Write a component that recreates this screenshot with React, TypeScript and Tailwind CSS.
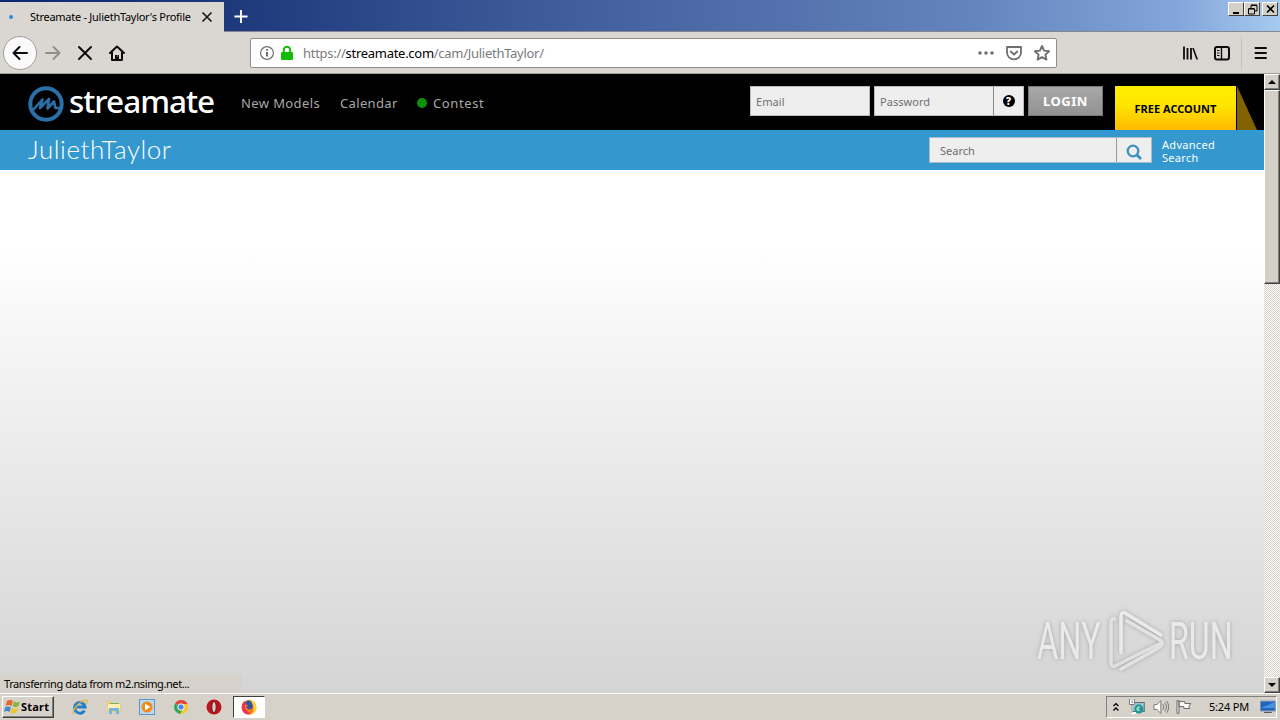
import type { ReactNode } from 'react';

const UI_FONT = "font-['Noto_Sans','Open_Sans',sans-serif]";

export default function App() {
  return (
    <div className={`flex h-[720px] w-[1280px] flex-col overflow-hidden bg-[#d6d2cb] text-black ${UI_FONT}`}>
      <TabStrip />
      <Toolbar />
      <div className="flex h-[619px]">
        <main className="relative flex w-[1264px] flex-col bg-white">
          <SiteHeader />
          <ModelBar />
          <div className="flex-1 bg-[linear-gradient(180deg,#ffffff_0%,#ffffff_14%,#d4d4d4_100%)]" />
          <div className="absolute bottom-0 left-0 flex h-[18px] w-[242px] items-center bg-[#d6d1ca] pb-0.5 pl-1 text-[11px] leading-none whitespace-nowrap">
            <span className="tracking-[-0.4px]">Transferring data from m2.nsimg.net...</span>
          </div>
          <Watermark />
        </main>
        <Scrollbar />
      </div>
      <Taskbar />
    </div>
  );
}

function TabStrip() {
  return (
    <div className="relative flex h-8 bg-[linear-gradient(90deg,#0b2a6d_0%,#203b7e_20%,#3d5b99_42%,#6484bd_76%,#83a5da_92%,#a6caf0_100%)]">
      <div className="mt-0.5 flex h-[30px] w-[224px] items-center bg-[#dad7d3] text-[11px]">
        <span className="ml-[9px] h-1 w-1 rounded-full bg-[#3584e4]" />
        <span className="ml-[17px] w-[166px] tracking-[-0.27px] whitespace-nowrap">Streamate - JuliethTaylor's Profile</span>
        <svg viewBox="0 0 12 12" className="ml-[5px] h-3 w-3"><path d="M1.5 1.5l9 9M10.5 1.5l-9 9" stroke="#1a1a1a" strokeWidth="1.7" /></svg>
      </div>
      <div className="flex flex-1 border-b border-[#828790] pt-[9px] pl-[9px]">
        <svg viewBox="0 0 16 16" className="h-[15px] w-4"><path d="M8 1v14M1 8h14" stroke="#fff" strokeWidth="2" /></svg>
      </div>
      <div className="absolute top-[2px] right-[2px] flex">
        <WindowButton><path d="M3 10h6" stroke="#000" strokeWidth="2" /></WindowButton>
        <WindowButton><path d="M5 5V2.5h6V8H9M5 2h6M2.5 6h6v5h-6zM2.5 5.5h6" fill="none" stroke="#000" /></WindowButton>
        <span className="w-[2px]" />
        <WindowButton><path d="M3 2.5l7 7M10 2.5l-7 7" stroke="#000" strokeWidth="1.6" /></WindowButton>
      </div>
    </div>
  );
}

function WindowButton({ children }: { children: ReactNode }) {
  return (
    <span className="flex h-[14px] w-4 items-center justify-center border border-t-white border-r-[#404040] border-b-[#404040] border-l-white bg-[#d4d0c8]">
      <svg viewBox="0 0 13 12" className="h-3 w-[13px]">{children}</svg>
    </span>
  );
}

function Toolbar() {
  return (
    <div className="flex h-[42px] items-center border-b border-[#a3a09c] bg-[#dad7d3]">
      <div className="ml-[3px] flex h-[34px] w-[34px] items-center justify-center rounded-full border border-[#a19e9a] bg-[#fafafa]">
        <svg viewBox="0 0 16 16" className="h-4 w-4"><path d="M15 8H1.5M7.5 2l-6 6 6 6" fill="none" stroke="#0c0c0d" strokeWidth="2" strokeLinecap="round" strokeLinejoin="round" /></svg>
      </div>
      <svg viewBox="0 0 16 16" className="ml-2 h-4 w-4"><path d="M1 8h13.5M8.5 2l6 6-6 6" fill="none" stroke="#918f8c" strokeWidth="2" strokeLinecap="round" strokeLinejoin="round" /></svg>
      <svg viewBox="0 0 16 16" className="ml-4 h-4 w-4"><path d="M2 2l12 12M14 2L2 14" stroke="#0c0c0d" strokeWidth="2" strokeLinecap="round" /></svg>
      <svg viewBox="0 0 16 16" className="ml-4 h-4 w-4" fill="none" stroke="#0c0c0d" strokeWidth="2" strokeLinejoin="round">
        <path d="M1 8l7-6.5L15 8" strokeLinecap="round" /><path d="M3 7v8h10V7" /><path d="M8 15v-5" strokeWidth="4" /><path d="M8 11h1" stroke="#dad7d3" strokeWidth="1" />
      </svg>
      <div className="ml-[125px] flex h-[30px] w-[807px] items-center rounded-[2px] border border-[#8f8d8a] bg-white">
        <svg viewBox="0 0 16 16" className="ml-2 h-4 w-4" fill="none" stroke="#6f6f70">
          <circle cx="8" cy="8" r="6.4" strokeWidth="1.2" /><path d="M8 7v4.5M8 4v1.7" strokeWidth="2" />
        </svg>
        <svg viewBox="0 0 16 16" className="ml-1 h-4 w-4"><path d="M4.8 8V5a3.2 3.2 0 0 1 6.4 0v3" fill="none" stroke="#12bc00" strokeWidth="2" /><rect x="2" y="7" width="12" height="8" rx="1.2" fill="#12bc00" /></svg>
        <div className="ml-2 w-[660px] pt-0.5 text-[13px] tracking-[-0.28px] whitespace-nowrap text-[#7b7b7b]">https://<span className="text-black">streamate.com</span>/cam/JuliethTaylor/</div>
        <svg viewBox="0 0 16 16" className="ml-[15px] h-4 w-4" fill="#6f6f70"><circle cx="2" cy="8" r="1.8" /><circle cx="8" cy="8" r="1.8" /><circle cx="14" cy="8" r="1.8" /></svg>
        <svg viewBox="0 0 16 16" className="ml-3 h-4 w-4" fill="none" stroke="#6f6f70" strokeWidth="1.8" strokeLinejoin="round" strokeLinecap="round"><path d="M1 2h14v5.5a7 6.8 0 0 1-14 0z" /><path d="M4.7 6.5L8 9.5l3.3-3" /></svg>
        <svg viewBox="0 0 16 16" className="ml-3 h-4 w-4" fill="none" stroke="#6f6f70" strokeWidth="1.9" strokeLinejoin="round"><path d="M8 1l2.1 4.6 5 .6-3.7 3.4 1 5L8 12.1l-4.4 2.5 1-5L.9 6.2l5-.6z" /></svg>
      </div>
      <svg viewBox="0 0 16 16" className="ml-[125px] h-4 w-4" stroke="#0c0c0d"><path d="M2 1.5v13M5.5 3v11.5M9 3v11.5" strokeWidth="1.8" /><path d="M11 3l4.2 11.5" strokeWidth="1.6" /></svg>
      <svg viewBox="0 0 16 16" className="ml-4 h-4 w-4" fill="none" stroke="#0c0c0d" strokeWidth="2"><rect x="1" y="2" width="14" height="12.5" rx="2" /><path d="M7.5 2v12" strokeWidth="1.4" /><path d="M3 5.5h2.5M3 8h2.5M3 10.5h2.5" strokeWidth="1" /></svg>
      <span className="ml-[11px] h-8 w-px bg-[#c3c0bc]" />
      <svg viewBox="0 0 16 16" className="ml-[11px] h-4 w-4" stroke="#0c0c0d" strokeWidth="2" strokeLinecap="round"><path d="M2.5 3H13M2.5 8H13M2.5 13H13" /></svg>
    </div>
  );
}

function SiteHeader() {
  return (
    <header className="flex h-14 items-start bg-black">
      <div className="flex items-center pt-3 pl-7">
        <svg viewBox="0 0 36 36" className="h-9 w-9" fill="none" stroke="#2a6fa8">
          <circle cx="18" cy="18" r="15.7" strokeWidth="4" />
          <path d="M5 24L14.5 13.5l-2.500 8.500 9-9-1.500 9.500 6.500-7 1.500 6.500H33" strokeWidth="2.6" strokeLinejoin="round" />
        </svg>
        <div className="ml-[5px] h-9 w-[146px] font-['Noto_Sans',sans-serif] text-[31.5px] leading-[29px] font-medium tracking-[-1px] whitespace-nowrap text-white">streamate</div>
      </div>
      <nav className="flex h-[60px] items-center pl-[26px] text-[13px] whitespace-nowrap text-[#a8a8a8]">
        <a className="w-[99px] tracking-[0.4px]">New Models</a>
        <a className="w-[77px] tracking-[0.35px]">Calendar</a>
        <span className="mr-[6px] mb-0.5 h-[10px] w-[10px] rounded-full bg-[#0a930a]" />
        <a className="w-[60px] tracking-[0.6px]">Contest</a>
      </nav>
      <form className="ml-[257px] flex pt-3 text-[11px] text-[#707070]">
        <span className="flex h-[30px] w-[120px] items-center border border-[#bbb] bg-[#eee] pt-0.5 pl-[5px] tracking-[0.1px]">Email</span>
        <span className="ml-1 flex h-[30px] w-[120px] items-center border border-[#bbb] border-r-[#888] bg-[#eee] pt-0.5 pl-[5px] tracking-[0.05px]">Password</span>
        <span className="flex h-[30px] w-[30px] items-center justify-center border border-l-0 border-[#bbb] bg-[#eee]">
          <span className="flex h-3 w-3 items-center justify-center rounded-full bg-black text-[10px] leading-none font-black text-white">?</span>
        </span>
        <span className="ml-1 flex h-[30px] w-[75px] items-center justify-center border border-[#777] bg-[linear-gradient(#a8a8a8,#929292)] pt-0.5 text-[13px] font-bold tracking-[0.5px] text-white">LOGIN</span>
      </form>
      <div className="mt-3 ml-3 flex h-11 w-[121px] items-center justify-center bg-[linear-gradient(#ffee00_0%,#ffe500_45%,#ffb900_100%)] pt-0.5 text-[11px] font-bold whitespace-nowrap">FREE ACCOUNT</div>
      <svg viewBox="0 0 21 44" className="mt-3 h-11 w-[21px]"><path d="M1 0l20 44H1z" fill="#806300" /></svg>
    </header>
  );
}

function ModelBar() {
  return (
    <div className="flex h-10 items-start border-y border-[#289bd8] bg-[#3498cf] text-white">
      <h1 className="ml-7 w-[901px] font-['Lato','Noto_Sans',sans-serif] text-[26px] leading-[37px] font-light tracking-[0.55px] whitespace-nowrap">JuliethTaylor</h1>
      <div className="mt-[6px] flex h-[26px] w-[223px] border border-[#a7bcc8] bg-[#eee]">
        <span className="flex w-[187px] items-center border-r border-[#999] pt-0.5 pl-[10px] text-[11px] text-[#6c6c6c]">Search</span>
        <span className="flex flex-1 items-center justify-center">
          <svg viewBox="0 0 16 16" className="mt-[3px] h-4 w-4" fill="none" stroke="#3b91c0" strokeWidth="2.3"><circle cx="7" cy="7" r="5.3" /><path d="M11 11l4 4" strokeWidth="2.8" /></svg>
        </span>
      </div>
      <div className="mt-[7px] ml-[10px] text-[11px] leading-[13px] tracking-[0.3px]">Advanced<br />Search</div>
    </div>
  );
}

function Watermark() {
  return (
    <div className="absolute right-[30px] bottom-[19px] flex h-[66px] w-[197px] items-center text-[#efefef] opacity-80 drop-shadow-[0_0_2px_#999]">
      <span className="w-[70px] shrink-0 origin-left scale-x-[0.64] font-['Roboto'] text-[51px] leading-none font-normal">ANY</span>
      <svg viewBox="0 0 58 66" className="h-[66px] w-[58px] shrink-0" fill="none" strokeWidth="3.6" strokeLinecap="round" strokeLinejoin="round">
        <path d="M8 11c-2-1-4 0-4 3v42c0 2 2 3 4 2l44-22" stroke="#e3e3e3" />
        <path d="M14 45V8c0-3 2-4 4-3l36 22" stroke="#efefef" />
        <path d="M14 61l39-22c3-2 3-5 0-7L20 13" stroke="#e6e6e6" />
      </svg>
      <span className="ml-[4px] w-[62px] shrink-0 origin-left scale-x-[0.63] font-['Roboto'] text-[51px] leading-none font-normal">RUN</span>
    </div>
  );
}

function Scrollbar() {
  return (
    <div className="flex w-4 flex-col bg-[repeating-conic-gradient(#ffffff_0%_25%,#d4d0c8_0%_50%)] bg-[length:2px_2px]">
      <ScrollButton><path d="M0 4l4-4 4 4z" /></ScrollButton>
      <div className="h-[194px] border border-t-white border-r-[#404040] border-b-[#404040] border-l-white bg-[#d4d0c8] shadow-[inset_-1px_-1px_0_#808080]" />
      <div className="flex-1" />
      <ScrollButton><path d="M0 0l4 4 4-4z" /></ScrollButton>
    </div>
  );
}

function ScrollButton({ children }: { children: ReactNode }) {
  return (
    <div className="flex h-4 items-center justify-center border border-t-white border-r-[#404040] border-b-[#404040] border-l-white bg-[#d4d0c8] shadow-[inset_-1px_-1px_0_#808080]">
      <svg viewBox="0 0 8 4" className="h-1 w-2">{children}</svg>
    </div>
  );
}

function Taskbar() {
  return (
    <footer className="flex h-[27px] items-center border-t border-white bg-[#d6d1c9]">
      <div className="ml-0.5 flex h-[22px] w-[52px] items-center border border-t-white border-r-[#404040] border-b-[#404040] border-l-white pl-0.5 text-[11px] font-bold shadow-[inset_-1px_-1px_0_#808080]">
        <svg viewBox="0 0 16 16" className="-ml-px h-4 w-4 shrink-0">
          <path d="M3 2q3-2 6 0L7.5 7q-3-2-6 0z" fill="#e8662a" /><path d="M10 2.5q3 2 6-.3L14.5 7q-3 2-6 .3z" fill="#80b83c" />
          <path d="M1 8.5q3-2 6 0L5.5 13q-3-2-5.5 0z" fill="#4588ca" /><path d="M8 8.8q3 2 6-.3l-1.500 5q-3 2-6 .3z" fill="#f4c430" />
        </svg>
        <span className="ml-px tracking-[0.2px]">Start</span>
      </div>
      <div className="ml-[18px] flex items-center gap-[17.5px]">
        <svg viewBox="0 0 16 16" className="h-4 w-4" fill="none">
          <path d="M12.5 11.5a5.3 5.3 0 1 1 .6-3.500H4" stroke="#237fc8" strokeWidth="3" />
          <path d="M2 15C-2 12 10 0 14.5 1.2q1.5 1-.5 4" stroke="#e6b839" strokeWidth="1.3" />
        </svg>
        <svg viewBox="0 0 16 16" className="h-4 w-4">
          <path d="M1 2h5l1 2h8v9H1z" fill="#efcf72" /><path d="M2 5h12v6H2z" fill="#fff0b0" /><path d="M4 4h9v1H4z" fill="#7aad5d" /><path d="M3 15V9h10v6h-3v-3H6v3z" fill="#75b4dc" />
        </svg>
        <svg viewBox="0 0 16 16" className="h-4 w-4">
          <rect x=".5" y=".5" width="15" height="15" fill="#b7d8ee" stroke="#5b98c9" /><circle cx="8" cy="8" r="5.5" fill="#f28b18" /><path d="M6 4.8v6.4L11.5 8z" fill="#fff" />
        </svg>
        <svg viewBox="0 0 16 16" className="h-4 w-4">
          <path d="M8 8L2 4.5A7 7 0 0 1 14.5 5H8z" fill="#e14433" /><path d="M8 8h3l-3.500 7A7 7 0 0 1 2 4.5z" fill="#35a853" /><path d="M8 5h6.5a7 7 0 0 1-7 10L11 8z" fill="#f9c928" /><circle cx="8" cy="8" r="3.2" fill="#4686ed" stroke="#fff" />
        </svg>
        <svg viewBox="0 0 16 16" className="h-4 w-4"><circle cx="8" cy="8" r="7.5" fill="#b71520" /><ellipse cx="8" cy="8" rx="2.2" ry="5.6" fill="#d6d1c9" stroke="#7c0a12" /></svg>
      </div>
      <div className="ml-[11px] flex h-[22px] w-8 items-center justify-center border border-t-[#404040] border-r-white border-b-white border-l-[#404040] bg-white">
        <svg viewBox="0 0 16 16" className="h-4 w-4">
          <circle cx="8" cy="8.3" r="7.4" fill="#fb7a1e" />
          <path d="M9 .5q6 2 6.6 8a7.5 7.5 0 0 1-6 7.1q5-5 2-9.6Q9 4 9 .5z" fill="#ffd332" />
          <path d="M.8 6q1-2.5 2.7-4l1 3q-2 6 5 9.5-6 2.5-8.5-4z" fill="#ee3450" />
          <path d="M5 2.5Q8 .5 10.5 3L12 7q-1 4-4 3.5l-3-2 2-2L4 5z" fill="#3853a4" />
        </svg>
      </div>
      <div className="mr-[3px] ml-auto flex h-[22px] w-[171px] items-center border border-t-[#808080] border-r-white border-b-white border-l-[#808080] text-[11px]">
        <svg viewBox="0 0 8 10" className="ml-[5px] h-[10px] w-2" fill="none" stroke="#000" strokeWidth="1.3"><path d="M1.5 4L4 1.5 6.5 4M1.5 8.5L4 6l2.5 2.5" /></svg>
        <svg viewBox="0 0 16 16" className="ml-[9px] h-4 w-4">
          <rect x="3.5" y="3.5" width="12" height="9" fill="#a9c9d2" stroke="#52666c" /><circle cx="10" cy="10" r="4.7" fill="#26989b" /><path d="M7 10q2-4 5-2-3 1-1 4-2 1-4-2z" fill="#91d9bd" /><path d="M1 1v4h4V1M3 5v9h4" fill="none" stroke="#fff" strokeWidth="2" /><path d="M.5 0v5.5h5V0M3 5v9" fill="none" stroke="#555" strokeWidth=".8" />
        </svg>
        <svg viewBox="0 0 17 16" className="ml-2 h-4 w-[17px]" fill="none" stroke="#777"><path d="M1 5.5h3l4-4v13l-4-4H1z" fill="#fff" /><path d="M10 5q2 3 0 6M12 3.5q3.5 4.5 0 9M14 2q4 6 0 12" /></svg>
        <svg viewBox="0 0 16 16" className="ml-[7px] h-4 w-4" fill="#fff" stroke="#666"><path d="M1 1.5h2v13H1zM3 2.5h6v2h6l-2 3 1 2H8v-2H3z" /></svg>
        <span className="ml-[17px] w-[43px] tracking-[-0.2px] whitespace-nowrap">5:24 PM</span>
        <svg viewBox="0 0 16 14" className="ml-[9px] h-[14px] w-4"><rect x=".5" y="1" width="15" height="10" fill="#2463bd" stroke="#7896b6" /><path d="M1 8l14-6v6z" fill="#4b92df" /><path d="M4 12.5h8" stroke="#445" /></svg>
      </div>
    </footer>
  );
}
